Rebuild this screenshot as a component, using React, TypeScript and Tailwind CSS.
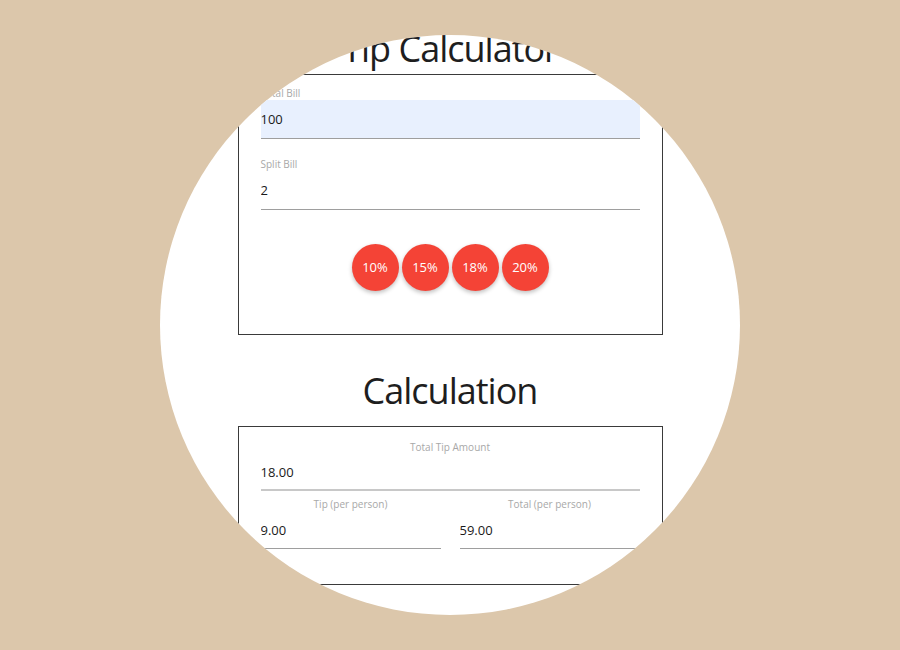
const font = { fontFamily: '"Open Sans", "Noto Sans", sans-serif' };

function Field({
  label,
  value,
  filled,
  center,
  line = "border-[#9e9e9e]",
  h = "h-[39px]",
}: {
  label: string;
  value: string;
  filled?: boolean;
  center?: boolean;
  line?: string;
  h?: string;
}) {
  return (
    <div className="flex flex-col">
      <label
        className={`text-[10px] leading-[13px] text-[#a8a8a8] ${center ? "text-center" : ""}`}
      >
        {label}
      </label>
      <input
        readOnly
        value={value}
        className={`${h} w-full border-b ${line} ${filled ? "bg-[#e8f0fe]" : "bg-transparent"} text-[13px] text-[#1a1a1a] outline-none`}
      />
    </div>
  );
}

export default function App() {
  const tips = ["10%", "15%", "18%", "20%"];
  return (
    <div
      className="flex h-[650px] w-[900px] items-center justify-center bg-[#dcc7ab]"
      style={font}
    >
      <div className="flex h-[580px] w-[580px] flex-col items-center overflow-hidden rounded-full bg-white text-[#1e1e1e]">
        <h1 className="-mt-[4px] mb-[7px] text-[36px] leading-[36px] tracking-[-1px]">
          Tip Calculator
        </h1>

        {/* Inputs */}
        <div className="w-[425px] border border-[#3a3a3a] px-[22px] pb-[43px] pt-[12px]">
          <Field label="Total Bill" value="100" filled />
          <div className="mt-[19px]">
            <Field label="Split Bill" value="2" />
          </div>
          <div className="mt-[34px] flex justify-center gap-[3px]">
            {tips.map((t) => (
              <button
                key={t}
                type="button"
                className="flex h-[47px] w-[47px] items-center justify-center rounded-full bg-[#f44336] text-[13px] text-white shadow-[0_2px_4px_rgba(0,0,0,0.25)]"
              >
                {t}
              </button>
            ))}
          </div>
        </div>

        <h2 className="mb-[17px] mt-[38px] text-[36px] leading-[36px] tracking-[-1px]">
          Calculation
        </h2>

        {/* Results */}
        <div className="w-[425px] border border-[#3a3a3a] px-[22px] pb-[35px] pt-[14px]">
          <Field
            label="Total Tip Amount"
            value="18.00"
            center
            h="h-[37px]"
            line="border-b-2 border-[#c8c8c8]"
          />
          <div className="mt-[7px] grid grid-cols-2 gap-[19px]">
            <Field label="Tip (per person)" value="9.00" center h="h-[38px]" />
            <Field label="Total (per person)" value="59.00" center h="h-[38px]" />
          </div>
        </div>
      </div>
    </div>
  );
}
